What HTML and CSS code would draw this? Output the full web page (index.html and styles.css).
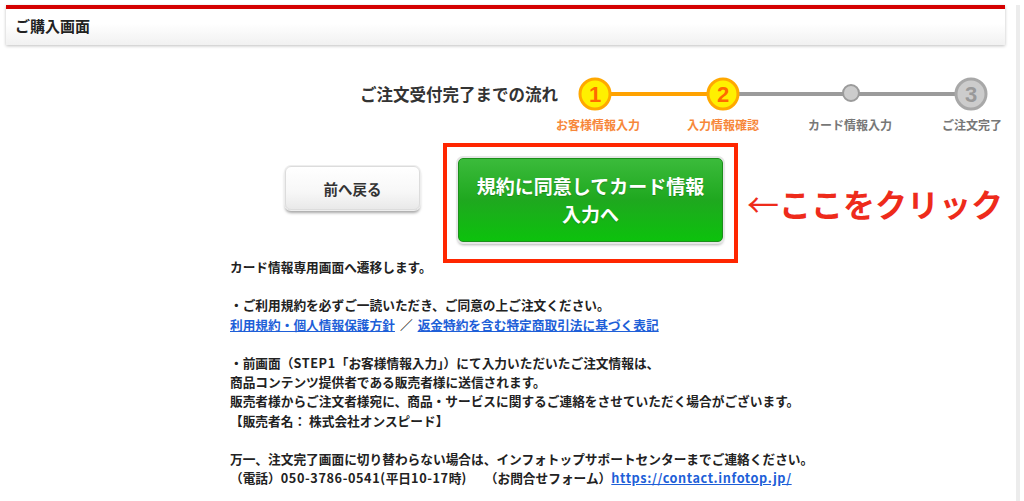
FILE: index.html
```html
<!DOCTYPE html>
<html lang="ja">
<head>
    <meta charset="UTF-8">
    <meta name="viewport" content="width=device-width, initial-scale=1.0">
    <title>ご購入画面</title>
    <link rel="stylesheet" href="styles.css">
</head>
<body>
    <div class="page">
        <div class="header">ご購入画面</div>

        <!-- order flow -->
        <div class="flow">
            <div class="flow-title">ご注文受付完了までの流れ</div>
            <svg class="steps" width="460" height="60" viewBox="0 0 460 60">
                <line x1="60" y1="18" x2="158" y2="18" stroke="#ffa200" stroke-width="4"/>
                <line x1="188" y1="18" x2="406" y2="18" stroke="#9b9b9b" stroke-width="4"/>
                <circle cx="45" cy="18" r="15" fill="#fff000" stroke="#ffa800" stroke-width="3"/>
                <text x="45" y="26" class="num num-on">1</text>
                <circle cx="173" cy="18" r="15" fill="#fff000" stroke="#ffa800" stroke-width="3"/>
                <text x="173" y="26" class="num num-on">2</text>
                <circle cx="301" cy="17" r="8" fill="#cccccc" stroke="#9b9b9b" stroke-width="2"/>
                <circle cx="421" cy="18" r="15" fill="#cccccc" stroke="#a8a8a8" stroke-width="3"/>
                <text x="421" y="26" class="num num-off">3</text>
                <text x="48" y="54" class="label label-on">お客様情報入力</text>
                <text x="173" y="54" class="label label-on">入力情報確認</text>
                <text x="300" y="54" class="label label-off">カード情報入力</text>
                <text x="422" y="54" class="label label-off">ご注文完了</text>
            </svg>
        </div>

        <div class="actions">
            <button class="btn-back">前へ戻る</button>
            <div class="highlight">
                <button class="btn-agree">規約に同意してカード情報<br>入力へ</button>
            </div>
            <div class="click-here"><span class="arrow">←</span>ここをクリック</div>
        </div>

        <div class="notes">
            <p>カード情報専用画面へ遷移します。</p>
            <p>・ご利用規約を必ずご一読いただき、ご同意の上ご注文ください。<br>
                <a href="#" class="link">利用規約・個人情報保護方針</a><span class="sep">／</span><a href="#" class="link">返金特約を含む特定商取引法に基づく表記</a></p>
            <p>・前画面（<span class="latin">STEP1</span>「お客様情報入力」）にて入力いただいたご注文情報は、<br>
                商品コンテンツ提供者である販売者様に送信されます。<br>
                販売者様からご注文者様宛に、商品・サービスに関するご連絡をさせていただく場合がございます。<br>
                【販売者名： 株式会社オンスピード】</p>
            <p>万一、注文完了画面に切り替わらない場合は、インフォトップサポートセンターまでご連絡ください。<br>
                （電話）<span class="latin">050-3786-0541(</span>平日<span class="latin">10-17</span>時<span class="latin">)</span><span class="gap"></span>（お問合せフォーム）<a href="#" class="link latin">https://contact.infotop.jp/</a></p>
        </div>
    </div>
</body>
</html>
```

FILE: styles.css
```css
body {
    margin: 0;
    font-family: "Noto Sans CJK JP", "Noto Sans", sans-serif;
    color: #222;
    background-color: #fff;
}
.page {
    width: 1016px;
    min-height: 100vh;
    border-right: 4px solid #ececec;
}
.header {
    margin: 5px 11px 0 6px;
    height: 36px;
    line-height: 34px;
    padding-left: 9px;
    border-top: 4px solid #d40000;
    background: linear-gradient(to bottom, #fff 40%, #f1f1f1 100%);
    box-shadow: 0 1px 3px rgba(0, 0, 0, 0.25);
    font-size: 15px;
    font-weight: bold;
}
.flow {
    display: flex;
    margin: 31px 0 0 360px;
}
.flow-title {
    flex-shrink: 0;
    width: 190px;
    white-space: nowrap;
    line-height: 36px;
    font-size: 16.5px;
    font-weight: bold;
    color: #333;
}
.steps {
    display: block;
    flex-shrink: 0;
}
.num {
    font-size: 22px;
    font-weight: bold;
    text-anchor: middle;
    font-family: "Liberation Sans", sans-serif;
}
.num-on {
    fill: #ff6a00;
}
.num-off {
    fill: #999;
}
.label {
    font-size: 12px;
    font-weight: bold;
    text-anchor: middle;
}
.label-on {
    fill: #f7873a;
}
.label-off {
    fill: #777;
}
.actions {
    display: flex;
    align-items: flex-start;
    margin: 7px 0 0 285px;
}
.btn-back {
    width: 135px;
    height: 44px;
    margin-top: 23px;
    border: 1px solid #dcdcdc;
    border-radius: 6px;
    background: linear-gradient(to bottom, #fff 0%, #f7f7f7 60%, #e9e9e9 100%);
    box-shadow: 0 0 0 1px #eee, 0 3px 3px rgba(0, 0, 0, 0.35);
    font-family: inherit;
    font-size: 14.5px;
    font-weight: bold;
    color: #333;
}
.highlight {
    margin-left: 23px;
    padding: 11px 11px 17px 11px;
    border: 4px solid #ff2600;
}
.btn-agree {
    display: block;
    width: 265px;
    height: 84px;
    border: 1px solid #1b8f1b;
    border-radius: 5px;
    background: linear-gradient(to bottom, #3bbb3b 0%, #1fa81f 50%, #0cc20c 100%);
    box-shadow: 0 0 0 2px #e6e6e6, 0 3px 3px rgba(0, 0, 0, 0.3);
    font-family: inherit;
    font-size: 19px;
    line-height: 28px;
    font-weight: bold;
    color: #fff;
    text-shadow: 0 1px 1px rgba(0, 0, 0, 0.2);
}
.click-here {
    align-self: center;
    margin-left: 9px;
    font-size: 32px;
    font-weight: bold;
    color: #ee2b1b;
}
.arrow {
    font-weight: normal;
}
.notes {
    margin: -6px 0 0 230px;
    font-size: 12.7px;
    line-height: 19.2px;
    font-weight: bold;
}
.notes p {
    margin: 0 0 19.2px 0;
}
.latin {
    letter-spacing: 0.6px;
}
.sep {
    margin: 0 5px;
}
.gap {
    display: inline-block;
    width: 18px;
}
.link {
    color: #1e5fd8;
    text-decoration: underline;
}
```
